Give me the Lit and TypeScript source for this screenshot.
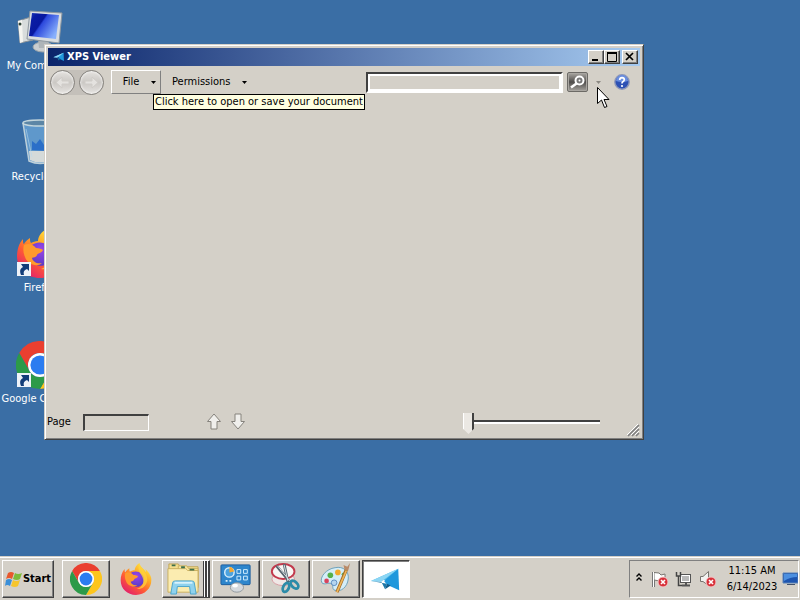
import { LitElement, html, svg, css } from "lit";
import { customElement, state } from "lit/decorators.js";

const chrome = svg`
  <path fill="#ea3f30" d="M24 12H44.8A24 24 0 0 0 3.2 12L13.6 30A12 12 0 0 1 24 12Z"/>
  <path fill="#fdc51c" d="M34.4 30L24 48A24 24 0 0 0 44.8 12H24A12 12 0 0 1 34.4 30Z"/>
  <path fill="#2c9a48" d="M13.6 30L3.2 12A24 24 0 0 0 24 48L34.4 30A12 12 0 0 1 13.6 30Z"/>
  <circle cx="24" cy="24" r="12" fill="#fff"/>
  <circle cx="24" cy="24" r="9.6" fill="#2b7cf0"/>`;

const firefox = svg`
  <defs>
    <linearGradient id="ffBody" x1="0.85" y1="0.05" x2="0.2" y2="0.95">
      <stop offset="0" stop-color="#fff04a"/><stop offset="0.35" stop-color="#ffa824"/>
      <stop offset="0.65" stop-color="#ff5a34"/><stop offset="1" stop-color="#e2206c"/>
    </linearGradient>
    <radialGradient id="ffGlobe" cx="0.5" cy="0.3" r="0.7">
      <stop offset="0" stop-color="#9a44e8"/><stop offset="1" stop-color="#5a3cc4"/>
    </radialGradient>
  </defs>
  <path fill="url(#ffBody)" d="M46 20C44 14 40 11 38 9C39 12 39 13 39 14C36 8 30 6 29 0C24 3 22 8 22 11C19 11 17 12 15 13C14 12 14 10 14 8C11 10 9 12 8 14C7 14 7 11 7 9C3 13 1 20 1 26C1 39 11 48 24 48C37 48 47 38 47 26C47 24 47 22 46 20Z"/>
  <path fill="url(#ffGlobe)" d="M15 16C19 12 27 11 32 16C38 21 37 31 31 34C25 38 16 35 14 28Z"/>
  <path fill="#ff9a2c" d="M8 15C12 13 17 14 20 18C23 18 26 19 27 20C26 23 22 23 21 25C20 28 17 27 16 28C17 32 21 34 26 33C21 38 11 34 9 27C7 23 7 18 8 15Z"/>
  <path fill="#ffd43c" d="M29 0C30 8 41 13 41 26C39 37 31 40 25 39C33 36 37 30 34 22C32 16 25 12 29 0Z" opacity="0.75"/>`;

const computer = svg`
  <defs><linearGradient id="scr" x1="0" x2="1" y2="0.6">
    <stop offset="0" stop-color="#2444c4"/><stop offset="0.2" stop-color="#0a1ca4"/><stop offset="0.45" stop-color="#0818a0"/>
    <stop offset="0.5" stop-color="#2c48dc"/><stop offset="1" stop-color="#88b0fc"/>
  </linearGradient></defs>
  <path d="M2 13L15 9L17 32L4 35Z" fill="#d8dcdc" stroke="#8a9298"/>
  <path d="M2 13L6 12L7 34L4 35Z" fill="#f4f4f0"/><circle cx="4" cy="16" r="1.5" fill="#304438"/>
  <ellipse cx="27" cy="39" rx="10" ry="5" fill="#c9cdd0" stroke="#9aa4aa"/>
  <path d="M22 31H33L32 40H23Z" fill="#aeb4b8"/>
  <path d="M14 3L46 5L43 35L11 31Z" fill="#d9dde0" stroke="#8d979f"/>
  <path d="M16 5L43 7L40 31L13 28Z" fill="url(#scr)"/>`;

const recycle = svg`
  <path d="M7 4L41 4L36 42Q24 47 13 42Z" fill="#6fa9dc" opacity="0.7"/>
  <path d="M13 32L35 32L34 41Q24 46 14 41Z" fill="#d5dad9"/>
  <path d="M16 22L20 25L24 20L32 32L16 31Z" fill="#2b6fc8"/>
  <path d="M10 10L16 38M36 10L32 38" stroke="#b9d9ee" fill="none" opacity="0.6"/>
  <path d="M7 4L13 42Q24 47 36 42L41 4" fill="none" stroke="#bdd0da" stroke-width="1.5"/>
  <ellipse cx="24" cy="4" rx="17" ry="3" fill="#5c86a6" stroke="#c4d6dc" stroke-width="1.5"/>`;

const plane = svg`
  <path d="M1 17L30 4L25 17L15 16Z" fill="#49b5e6"/>
  <path d="M1 17L12 18L16 26L18 20Z" fill="#1e78a8"/>
  <path d="M15 17L30 4L31 27L18 21Z" fill="#2098dc"/>
  <path d="M1 17L30 4L12 18Z" fill="#8cd6f4"/>
  <path d="M16 26L18 20L22 22Z" fill="#0e5c8c"/>`;

const winFlag = svg`
  <path d="M3 3Q6 1 9 3L7 9Q4 7 1 9Z" fill="#e8582c"/>
  <path d="M10 3Q13 5 17 3L15 9Q12 11 8 9Z" fill="#7dbb3a"/>
  <path d="M1 10Q4 8 7 10L5 16Q2 14 0 16Z" fill="#3b8fd8"/>
  <path d="M8 10Q11 12 15 10L13 16Q10 18 6 16Z" fill="#f6c52c"/>`;

const folder = svg`
  <path d="M2 1H12L14 4H33V26H2Z" fill="#f3dd8c" stroke="#c0a456"/>
  <path d="M12 3H21L23 6H33V26H12Z" fill="#f7e59c" stroke="#c9ae5e"/>
  <path d="M1 6H20L22 8H33V31H1Z" fill="#fbecb0" stroke="#c9ae5e"/>
  <path d="M5 2.500H9M15 4.500H19M24 7H29" stroke="#3c6f4c" stroke-width="2"/>
  <path d="M4 33L6 21Q6 19 9 19H26Q29 19 29 21L31 33H25L24 25H11L10 33Z" fill="#8fd2ee" stroke="#4aa3cc"/>
  <path d="M8 21H27" stroke="#d8f3fc" stroke-width="2"/>`;

const controlPanel = svg`
  <rect x="1" y="2" width="31" height="21" rx="1" fill="#2e86cc" stroke="#1b5c9c"/>
  <circle cx="10" cy="10" r="5" fill="#4ba2df" stroke="#d9effc" stroke-width="1.5"/>
  <path d="M10 10V4A6 6 0 0 1 15 9Z" fill="#f3a832"/>
  <path d="M18 7H22V11H18ZM25 7H29V11H25ZM18 14H22V18H18ZM25 14H29V18H25Z" fill="none" stroke="#d4f0ff"/>
  <path d="M6 19H8M10 19H12" stroke="#d9effc" stroke-width="2"/>
  <ellipse cx="18" cy="26" rx="7" ry="5" fill="#d5d9dd" stroke="#8f979d"/>
  <ellipse cx="16" cy="24" rx="3" ry="2" fill="#fff"/>`;

const scissors = svg`
  <ellipse cx="14" cy="17" rx="12" ry="7" fill="#f0e8e6" stroke="#d69aa0"/>
  <ellipse cx="14" cy="9" rx="12" ry="8" fill="#f8f6f4" stroke="#c2394c" stroke-width="2"/>
  <path d="M7 3L21 20M15 1L19 20" stroke="#56656f" stroke-width="3"/>
  <path d="M8 3L21 19M15 2L19 19" stroke="#e0e7ea" stroke-width="1"/>
  <ellipse cx="17" cy="26" rx="3" ry="5" transform="rotate(25 17 26)" fill="none" stroke="#2c8ba8" stroke-width="3"/>
  <ellipse cx="26" cy="23" rx="3" ry="5" transform="rotate(-45 26 23)" fill="none" stroke="#2c8ba8" stroke-width="3"/>`;

const paint = svg`
  <path d="M16 5C25 3 31 9 30 17C29 26 22 31 16 29C12 28 15 24 12 22C9 20 5 24 2 21C-1 15 7 6 16 5Z" fill="#d4edf8" stroke="#6a9eb8"/>
  <circle cx="11" cy="13" r="3" fill="#56b04a"/><circle cx="19" cy="10" r="3" fill="#f2a92c"/>
  <circle cx="7" cy="19" r="2.5" fill="#d8445c"/><circle cx="15" cy="21" r="3" fill="#b5d5ef" stroke="#5c8cc0"/>
  <circle cx="25" cy="12" r="2" fill="#58b06a"/>
  <path d="M28 7L18 31" stroke="#a46b24" stroke-width="3.5"/><path d="M28 8L18 31" stroke="#eeb65a" stroke-width="1.8"/>
  <path d="M25 2L29 4L32 0L30 8L26 7Z" fill="#b98a68"/>`;

const shortcut = svg`
  <rect x="1" y="32" width="14" height="14" fill="#eef2f8"/>
  <path d="M5 45C3 40 5 38 7 37L5 34H13V41L11 39C8 40 7 42 8 45Z" fill="#123c78"/>`;

const badge = svg`<circle cx="12" cy="12" r="5" fill="#d8313a" stroke="#f4c8c8"/><path d="M10 10L14 14M14 10L10 14" stroke="#fff" stroke-width="1.6"/>`;

@customElement("app-root")
export class AppRoot extends LitElement {
  static styles = css`
    :host {
      display: block;
      font: 11px/14px "DejaVu Sans Condensed", "DejaVu Sans", sans-serif;
      font-stretch: condensed;
      color: #000;
    }
    * { box-sizing: border-box; }
    svg { display: block; flex: none; }
    button { font: inherit; color: inherit; padding: 0; background: #d4d0c8; border: 0; display: flex; align-items: center; justify-content: center; }
    input { font: inherit; margin: 0; }
    .screen { min-height: 100vh; display: flex; flex-direction: column; background: #3a6ea5; overflow: hidden; position: relative; }
    .desktop { flex: 1; padding-top: 8px; }
    .shortcuts { list-style: none; margin: 0; padding: 0; width: 80px; }
    .shortcuts a { height: 111px; display: flex; flex-direction: column; align-items: center; gap: 3px; color: #fff; text-decoration: none; white-space: nowrap; }

    .window {
      position: absolute; left: 44px; top: 44px; width: 75%; height: 66vh; padding: 2px;
      display: flex; flex-direction: column; background: #d4d0c8;
      border: 1px solid; border-color: #d4d0c8 #404040 #404040 #d4d0c8;
      box-shadow: inset 1px 1px #fff, inset -1px -1px #808080;
    }
    .titlebar { height: 18px; margin: 1px; flex: none; display: flex; align-items: center; padding: 0 2px 0 5px; gap: 2px; color: #fff; background: linear-gradient(90deg, #0a246a, #a6caf0); }
    h1 { font: inherit; font-weight: bold; margin: 0; flex: 1; }
    .caption { display: flex; }
    .caption button { width: 16px; height: 14px; }
    .caption button:last-child { margin-left: 2px; }
    .bevel { border: 1px solid; border-color: #fff #404040 #404040 #fff; box-shadow: inset -1px -1px #808080; }

    .toolbar { height: 30px; display: flex; align-items: center; padding: 0 11px 0 3px; flex: none; }
    .nav { display: flex; gap: 4px; margin-right: 7px; background: #c4c0ba; border-radius: 13px; }
    .nav button { width: 25px; height: 25px; border-radius: 50%; border: 1px solid #85827d; background: linear-gradient(#e4e2df, #cbc8c4 50%, #e6e4e1); box-shadow: inset 0 0 2px 1px #fff8; }
    .menu { height: 24px; padding: 0 4px 0 11px; gap: 12px; }
    .menu.raised { width: 50px; padding: 0 3px 0 10px; border: 1px solid; border-color: #fff #808080 #808080 #fff; }
    .search { flex: 1; display: flex; align-items: center; justify-content: flex-end; }
    .query { width: 52%; height: 21px; border: 2px solid; border-color: #404040 #fff #fff #404040; background: #d4d0c8; box-shadow: inset 0 0 0 2px #fff; }
    .find { width: 21px; height: 20px; margin-left: 4px; border: 1px solid #6c6a66; border-radius: 2px; background: linear-gradient(#aaa7a2, #4f4d4b 50%, #a5a29d); box-shadow: inset 0 0 0 1px #a9a6a1; }
    .more { width: 21px; height: 20px; }
    .help { margin-left: 5px; }
    .page-area { flex: 1; }
    .footer { height: 30px; display: flex; align-items: center; flex: none; }
    .page { width: 66px; height: 17px; margin-left: 12px; background: #d4d0c8; border: 2px solid; border-color: #404040 #fff #fff #404040; border-width: 2px 1px 1px 2px; }
    .steps { display: flex; gap: 8px; margin-left: 57px; }
    .steps button, .help, .more { background: none; }
    .zoom { appearance: none; margin-left: auto; width: 137px; height: 22px; background: none; }
    .zoom::-webkit-slider-runnable-track { height: 4px; border-top: 2px solid #404040; border-bottom: 2px solid #fff; }
    .zoom::-webkit-slider-thumb { appearance: none; width: 11px; height: 21px; margin-top: -9px; background: linear-gradient(90deg, #fff 1px, #ebe8e3 1px 9px, #404040 9px); clip-path: polygon(0 0, 100% 0, 100% 75%, 50% 100%, 0 75%); }
    .grip { margin: 0 1px 0 27px; align-self: flex-end; }

    .tip { position: absolute; left: 153px; top: 94px; border: 1px solid #000; background: #ffffe1; padding: 0 1px; white-space: nowrap; }
    .cursor { position: absolute; left: 597px; top: 87px; }

    .taskbar { height: 44px; flex: none; display: flex; padding: 3px 1px 2px 2px; background: #d4d0c8; border-top: 1px solid #d4d0c8; box-shadow: inset 0 1px #fff; }
    .start { width: 52px; gap: 1px; font-weight: bold; margin-right: 8px; }
    .tasks { display: flex; gap: 2px; flex: 1; }
    .task { width: 48px; }
    .flat { border-color: transparent; box-shadow: none; }
    .stacked { box-shadow: inset -1px 0 #404040, inset -2px 0 #fff, inset -4px 0 #404040, inset -5px 0 #fff, inset -6px 0 #404040, inset 0 -1px #808080; padding-right: 6px; }
    .active { background: #fff; border-color: #404040 #fff #fff #404040; box-shadow: inset 1px 1px #808080; }
    .tray { display: flex; align-items: center; padding: 0 0 0 5px; border: 1px solid; border-color: #808080 #fff #fff #808080; }
    .tray svg { margin-right: 7px; }
    .clock { display: flex; flex-direction: column; align-items: center; line-height: 16px; margin: 0 4px 0 3px; width: 52px; white-space: nowrap; }
    .tray .show { margin: 0; }
  `;

  @state() private zoom = 0;

  private shortcuts = [
    { name: "My Computer", icon: computer, link: false },
    { name: "Recycle Bin", icon: recycle, link: false },
    { name: "Firefox", icon: firefox, link: true },
    { name: "Google Chrome", icon: chrome, link: true },
  ];

  private tasks = [
    { name: "Google Chrome", icon: chrome, box: "0 0 48 48", look: "" },
    { name: "Firefox", icon: firefox, box: "0 0 48 48", look: "flat" },
    { name: "Explorer", icon: folder, box: "0 0 34 34", look: "stacked" },
    { name: "Control Panel", icon: controlPanel, box: "0 0 34 34", look: "" },
    { name: "Snipping Tool", icon: scissors, box: "0 0 34 34", look: "" },
    { name: "Paint", icon: paint, box: "0 0 34 34", look: "" },
    { name: "XPS Viewer", icon: plane, box: "0 -2 34 34", look: "active" },
  ];

  private caret(color = "#000") {
    return html`<svg width="5" height="3" viewBox="0 0 5 3"><path d="M0 0H5L2.5 3Z" fill=${color}/></svg>`;
  }

  private renderWindow() {
    return html`
      <section class="window" aria-label="XPS Viewer">
        <header class="titlebar">
          <svg width="12" height="12" viewBox="0 0 34 32">${plane}</svg>
          <h1>XPS Viewer</h1>
          <div class="caption">
            <button class="bevel" aria-label="Minimize"><svg width="12" height="10"><path d="M2 8H8" stroke="#000" stroke-width="2"/></svg></button>
            <button class="bevel" aria-label="Maximize"><svg width="12" height="10"><path d="M1.5 1V9.5H10.5V1M1 1H11" fill="none" stroke="#000"/><path d="M1 1H11" stroke="#000" stroke-width="2"/></svg></button>
            <button class="bevel" aria-label="Close"><svg width="12" height="10"><path d="M2 1L9 8M9 1L2 8" stroke="#000" stroke-width="1.7"/></svg></button>
          </div>
        </header>
        <div class="toolbar">
          <div class="nav">
            <button aria-label="Back"><svg width="15" height="13"><path d="M14 5H7V1L1 6.5L7 12V8H14Z" fill="#e4e2df" stroke="#cfccc8"/></svg></button>
            <button aria-label="Forward"><svg width="15" height="13"><path d="M1 5H8V1L14 6.5L8 12V8H1Z" fill="#e4e2df" stroke="#cfccc8"/></svg></button>
          </div>
          <button class="menu raised">File${this.caret()}</button>
          <button class="menu">Permissions${this.caret()}</button>
          <div class="search">
            <input class="query" type="text" aria-label="Search" />
            <button class="find" aria-label="Find"><svg width="17" height="16"><circle cx="10.5" cy="6.500" r="4" fill="#777" stroke="#fff" stroke-width="2"/><circle cx="10.5" cy="6.5" r="1" fill="#fff"/><path d="M7.500 9.500L2 13.500" stroke="#fff" stroke-width="2.500"/></svg></button>
            <button class="more" aria-label="Search options">${this.caret("#8c8983")}</button>
            <button class="help" aria-label="Help">
              <svg width="16" height="16" viewBox="0 0 16 16"><circle cx="8" cy="8" r="7.2" fill="#2c50b4" stroke="#8d97b8" stroke-width="1.4"/><path d="M2 7A6 6 0 0 1 14 7Q8 9 2 7Z" fill="#6a8ee0"/><path d="M5.7 6Q5.8 3.7 8 3.7Q10.3 3.8 10.3 5.8Q10.2 7 8.8 7.8Q8 8.3 8 9.6" fill="none" stroke="#fff" stroke-width="1.7"/><circle cx="8" cy="12" r="1.1" fill="#fff"/></svg>
            </button>
          </div>
        </div>
        <div class="page-area"></div>
        <footer class="footer">
          <label for="page">Page</label>
          <input id="page" class="page" type="text" />
          <div class="steps">
            <button aria-label="Previous page"><svg width="16" height="18"><path d="M8 1L14.5 8.5H11V16H5V8.5H1.5Z" fill="#f0efec" stroke="#86837d"/></svg></button>
            <button aria-label="Next page"><svg width="16" height="18"><path d="M8 16L14.5 8.5H11V1H5V8.5H1.5Z" fill="#f0efec" stroke="#86837d"/></svg></button>
          </div>
          <input class="zoom" type="range" aria-label="Zoom" .value=${String(this.zoom)}
            @input=${(e: Event) => (this.zoom = Number((e.target as HTMLInputElement).value))} />
          <svg class="grip" width="13" height="13"><path d="M1 12L12 1M5 12L12 5M9 12L12 9" stroke="#808080" stroke-width="1.6"/><path d="M0 11L11 0M4 11L12 3M8 11L12 7" stroke="#fff"/></svg>
        </footer>
      </section>`;
  }

  render() {
    return html`
      <div class="screen">
        <main class="desktop">
          <ul class="shortcuts">
            ${this.shortcuts.map((s) => html`<li><a href="#">
              <svg width="48" height="48" viewBox="0 0 48 48">${s.icon}${s.link ? shortcut : ""}</svg>
              <span>${s.name}</span></a></li>`)}
          </ul>
        </main>
        ${this.renderWindow()}
        <div class="tip" role="tooltip">Click here to open or save your document</div>
        <svg class="cursor" width="13" height="22" viewBox="0 0 13 22"><path d="M0.5 0.5V16.5L4.5 13L7.5 20.5L10 19.5L7 12.5H12Z" fill="#fff" stroke="#000"/></svg>
        <footer class="taskbar">
          <button class="start bevel"><svg width="17" height="18" viewBox="0 0 17 18">${winFlag}</svg>Start</button>
          <nav class="tasks">
            ${this.tasks.map((t) => html`<button class="task bevel ${t.look}" aria-label=${t.name}>
              <svg width="32" height="32" viewBox=${t.box}>${t.icon}</svg></button>`)}
          </nav>
          <div class="tray">
            <svg width="9" height="14"><path d="M1.5 4.5L4 2L6.500 4.500M1.500 8.500L4 6L6.500 8.500" fill="none" stroke="#000" stroke-width="1.4"/></svg>
            <svg width="17" height="18"><path d="M2.500 2V17" stroke="#777" stroke-width="3"/><path d="M3 2.500L8 3L10 5L14 4V10L9 11L3 10Z" fill="#fff" stroke="#77746f"/><path d="M2.500 2V17" stroke="#fff"/>${badge}</svg>
            <svg width="17" height="18"><rect x="5.500" y="4.500" width="10" height="8" fill="#b9b9b9" stroke="#555"/><rect x="6.500" y="5.500" width="8" height="6" fill="none" stroke="#fff"/><path d="M7 15.500H15M11 13V15" stroke="#555" stroke-width="2"/><path d="M1.500 2V6H5.500V2M3.500 6V15.500H7" fill="none" stroke="#444" stroke-width="1.500"/></svg>
            <svg width="17" height="18"><path d="M1.500 6.500H4L9.500 1.500V15.500L4 11.500H1.500Z" fill="#f2f2f0" stroke="#77746f"/>${badge}</svg>
            <time class="clock"><span>11:15 AM</span><span>6/14/2023</span></time>
            <svg class="show" width="16" height="16"><path d="M1 2H16V12H1Z" fill="#1d55b0" stroke="#5a83b8"/><path d="M2 3H15V6Q8 6 2 10Z" fill="#4c8fe0"/><path d="M5 13H13V14H5Z" fill="#44536c"/></svg>
          </div>
        </footer>
      </div>`;
  }
}
